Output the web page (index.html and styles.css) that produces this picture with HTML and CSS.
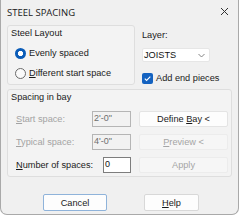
FILE: index.html
```html
<!DOCTYPE html>
<html>
<head>
<meta charset="utf-8">
<link rel="stylesheet" href="styles.css">
</head>
<body>
<div class="dialog">
  <div class="titlebar">
    <span class="title">STEEL SPACING</span>
    <svg class="close" width="9" height="9" viewBox="0 0 9 9"><path d="M1 1L8 8M8 1L1 8" stroke="#333" stroke-width="1" fill="none"/></svg>
  </div>
  <div class="content">
    <div class="toprow">
      <div class="group layout">
        <div class="gtitle">Steel Layout</div>
        <div class="opt first"><span class="radio on"></span><span>Evenly spaced</span></div>
        <div class="opt"><span class="radio"></span><span><u>D</u>ifferent start space</span></div>
      </div>
      <div class="rightcol">
        <div class="lbl">Layer:</div>
        <div class="combo"><span>JOISTS</span>
          <svg width="7" height="5" viewBox="0 0 7 5"><path d="M0.5 1L3.5 4L6.5 1" stroke="#777" stroke-width="0.9" fill="none"/></svg>
        </div>
        <div class="chk"><span class="box"><svg width="9" height="9" viewBox="0 0 9 9"><path d="M1.8 4.6L3.6 6.4L7.3 2.6" stroke="#fff" stroke-width="1.1" fill="none"/></svg></span><span>Add end pieces</span></div>
      </div>
    </div>
    <div class="group spacing">
      <div class="gtitle">Spacing in bay</div>
      <div class="rows">
        <div class="row">
          <span class="rlabel dis"><u>S</u>tart space:</span>
          <span class="tb dis">2'-0"</span>
          <span class="btn"><span>Define <u>B</u>ay &lt;</span></span>
        </div>
        <div class="row">
          <span class="rlabel dis"><u>T</u>ypical space:</span>
          <span class="tb dis">4'-0"</span>
          <span class="btn disb"><span><u>P</u>review &lt;</span></span>
        </div>
        <div class="row">
          <span class="rlabel"><u>N</u>umber of spaces:</span>
          <span class="tb small">0</span>
          <span class="btn disb"><span>Apply</span></span>
        </div>
      </div>
    </div>
    <div class="bottom">
      <span class="bbtn cancel"><span>Cancel</span></span>
      <span class="bbtn help"><span><u>H</u>elp</span></span>
    </div>
  </div>
</div>
</body>
</html>
```
FILE: styles.css
```css
* { box-sizing: border-box; }
body {
  margin: 0;
  background: #ffffff;
  font-family: "Liberation Sans", Arial, sans-serif;
  font-size: 9.2px;
  color: #1b1b1b;
}
u { text-decoration-thickness: 1px; text-underline-offset: 1px; }
.dialog {
  width: 239px;
  height: 215px;
  background: #f0f0f0;
  border: 1px solid #a9a9a9;
  border-top: none;
  border-radius: 0 0 7px 7px;
}
.titlebar {
  height: 24px;
  display: flex;
  align-items: center;
  justify-content: space-between;
  padding: 0 9px 0 6px;
}
.title {
  font-family: "Open Sans", sans-serif;
  font-size: 9.5px;
  color: #1a1a1a;
  padding-top: 1px;
}
.close { margin-top: -1px; }
.content { padding: 1px 0 0 6px; }
.toprow { display: flex; }
.group {
  border: 1px solid #dedede;
  border-radius: 3px;
  background: #f3f3f3;
}
.gtitle {
  line-height: 11px;
  padding: 2px 0 0 3px;
  color: #1a1a1a;
}
.layout { width: 128px; height: 60px; flex: none; }
.opt {
  display: flex;
  align-items: center;
  height: 14px;
  margin-top: 6px;
  padding-left: 7px;
  white-space: nowrap;
}
.opt.first { margin-top: 7px; }
.radio {
  width: 11px;
  height: 11px;
  border-radius: 50%;
  border: 1px solid #6a6a6a;
  background: #fafafa;
  margin-right: 3px;
  flex: none;
}
.radio.on {
  border: none;
  background: radial-gradient(circle, #ffffff 0 2.4px, #0a5cb8 2.9px);
}
.rightcol { margin-left: 7px; width: 85px; }
.lbl { line-height: 11px; padding-top: 5px; }
.combo {
  margin-top: 7px;
  width: 68px;
  height: 14px;
  background: #ffffff;
  border: 1px solid #e6e6e6;
  border-radius: 2px;
  display: flex;
  align-items: center;
  justify-content: space-between;
  padding: 0 4px 0 1px;
  color: #111;
}
.chk {
  display: flex;
  align-items: center;
  margin-top: 10px;
  height: 12px;
  white-space: nowrap;
}
.box {
  width: 11px;
  height: 11px;
  border-radius: 2px;
  background: #1462c0;
  margin-right: 3px;
  display: flex;
  align-items: center;
  justify-content: center;
  flex: none;
}
.spacing { width: 225px; height: 88px; margin-top: 4px; }
.rows { padding: 8px 0 0 8px; display: flex; flex-direction: column; gap: 7px; }
.row { display: flex; align-items: center; height: 16px; }
.rlabel { width: 76px; flex: none; white-space: nowrap; }
.dis { color: #a3a3a3; }
.tb {
  flex: none;
  width: 39px;
  height: 16px;
  border: 1px solid #b5b5b5;
  background: #f2f2f2;
  padding-left: 1px;
  line-height: 13px;
  font-family: "Liberation Sans Narrow", "Liberation Sans", sans-serif;
  color: #6e6e6e;
  font-size: 9px;
}
.tb.small {
  width: 28px;
  margin-left: 11px;
  background: #ffffff;
  border-color: #7d7d7d;
  color: #111;
}
.btn {
  flex: none;
  margin-left: 8px;
  width: 89px;
  height: 16px;
  background: #fdfdfd;
  border: 1px solid #e4e4e4;
  border-radius: 2px;
  display: flex;
  align-items: center;
  justify-content: center;
  color: #1a1a1a;
  white-space: nowrap;
}
.btn.disb { background: #f6f6f6; color: #a5a5a5; border-color: #ececec; }
.bottom { display: flex; margin-top: 17px; padding-left: 36px; }
.bbtn {
  height: 17px;
  background: #fdfdfd;
  border: 1px solid #d8d8d8;
  border-radius: 2px;
  display: flex;
  align-items: center;
  justify-content: center;
  color: #1a1a1a;
}
.cancel { width: 64px; border-color: #8fb3da; }
.help { width: 55px; margin-left: 37px; }
```
